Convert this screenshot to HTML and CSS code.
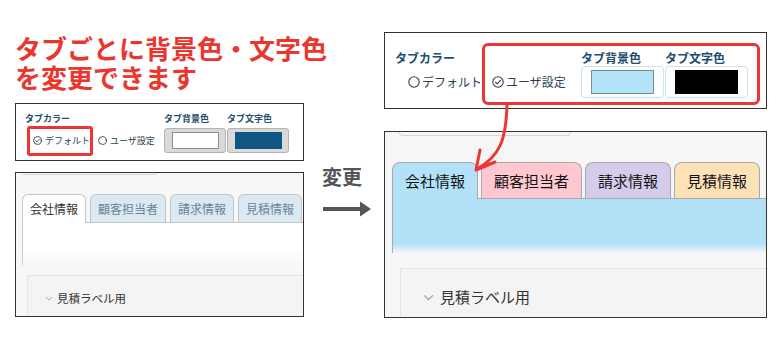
FILE: index.html
```html
<!DOCTYPE html>
<html lang="ja">
<head>
  <meta charset="UTF-8"/>
  <meta name="viewport" content="width=device-width, initial-scale=1.0"/>
  <title>タブカラー設定</title>
  <link rel="stylesheet" href="styles.css">
</head>
<body>
  <div class="page">
    <!-- before -->
    <section class="col-before">
      <h1 class="headline">
        <span class="headline-line">タブごとに背景色・文字色</span>
        <span class="headline-line">を変更できます</span>
      </h1>
      <div class="shot setting setting--sm">
        <div class="setting-grid">
          <span class="setting-label">タブカラー</span>
          <span class="setting-label">タブ背景色</span>
          <span class="setting-label">タブ文字色</span>
          <div class="radios">
            <span class="radio is-marked">
              <svg class="radio-icon" viewBox="0 0 12 12"><circle cx="6" cy="6" r="5.2"/><path d="M3.5 6.1l1.7 1.8 3.3-3.6"/></svg>デフォルト
            </span>
            <span class="radio">
              <svg class="radio-icon" viewBox="0 0 12 12"><circle cx="6" cy="6" r="5.2"/></svg>ユーザ設定
            </span>
          </div>
          <div class="swatch"><span class="swatch-fill fill-white"></span></div>
          <div class="swatch"><span class="swatch-fill fill-navy"></span></div>
        </div>
      </div>
      <div class="shot tabs-shot tabs-shot--sm">
        <div class="top-edge"></div>
        <div class="tab-row">
          <span class="tab is-active">会社情報</span>
          <span class="tab">顧客担当者</span>
          <span class="tab">請求情報</span>
          <span class="tab">見積情報</span>
        </div>
        <div class="tab-body"></div>
        <div class="fold">
          <svg class="chevron" viewBox="0 0 10 6"><polyline points="1,1 5,5 9,1"/></svg>見積ラベル用
        </div>
      </div>
    </section>

    <!-- arrow between -->
    <div class="col-middle">
      <div class="change-label">変更</div>
      <svg class="change-arrow" viewBox="0 0 48 16"><rect x="0" y="6" width="38" height="4"/><polygon points="37,0.5 48,8 37,15.5"/></svg>
    </div>

    <!-- after -->
    <section class="col-after">
      <div class="shot setting setting--lg">
        <div class="setting-grid">
          <span class="setting-label">タブカラー</span>
          <span class="setting-label">タブ背景色</span>
          <span class="setting-label">タブ文字色</span>
          <div class="radios">
            <span class="radio">
              <svg class="radio-icon" viewBox="0 0 12 12"><circle cx="6" cy="6" r="5.2"/></svg>デフォルト
            </span>
            <span class="radio">
              <svg class="radio-icon" viewBox="0 0 12 12"><circle cx="6" cy="6" r="5.2"/><path d="M3.5 6.1l1.7 1.8 3.3-3.6"/></svg>ユーザ設定
            </span>
          </div>
          <div class="swatch"><span class="swatch-fill fill-sky"></span></div>
          <div class="swatch"><span class="swatch-fill fill-black"></span></div>
        </div>
        <div class="mark-box"></div>
      </div>
      <div class="shot tabs-shot tabs-shot--lg">
        <div class="top-edge"></div>
        <div class="tab-row">
          <span class="tab tab-sky is-active">会社情報</span>
          <span class="tab tab-pink">顧客担当者</span>
          <span class="tab tab-lilac">請求情報</span>
          <span class="tab tab-peach">見積情報</span>
        </div>
        <div class="tab-body"></div>
        <div class="fold">
          <svg class="chevron" viewBox="0 0 10 6"><polyline points="1,1 5,5 9,1"/></svg>見積ラベル用
        </div>
      </div>
      <svg class="pointer" viewBox="0 0 383 350">
        <path d="M123 105 C122 140 116 156 93 169"/>
        <path d="M96 150 L92 170 L111 162"/>
      </svg>
    </section>
  </div>
</body>
</html>
```

FILE: styles.css
```css
:root {
  --red: #ec3636;
  --headline: #e9372f;
  --label: #1f4d6d;
  --sky: #b3e2f8;
  --panel-bg: #f7f7f7;
  --font-stack: "Noto Sans CJK JP", "Noto Sans", sans-serif;
}
*, *::before, *::after { box-sizing: border-box; }
body {
  margin: 0;
  background: #fff;
  color: #333;
  font-family: var(--font-stack);
}
.page {
  display: flex;
  height: 350px;
  padding-left: 15px;
  overflow: hidden;
}

/* columns */
.col-before { width: 289px; padding-top: 36px; }
.col-middle { width: 80px; padding: 165px 0 0 18px; }
.col-after { width: 383px; padding-top: 32px; position: relative; }

.headline {
  display: flex; flex-direction: column; gap: 6px;
  margin: 0 0 15px;
  font-size: 26px; line-height: 23px; font-weight: 700;
  color: var(--headline);
  white-space: nowrap;
}
.headline-line { display: block; height: 23px; }
.change-label { font-size: 20px; line-height: 24px; font-weight: 700; color: #555; }
.change-arrow { display: block; width: 48px; height: 16px; margin: 12px 0 0 1px; fill: #555; }

.shot {
  position: relative;
  border: 1px solid #333;
  background: #fff;
  overflow: hidden;
}

/* tab colour setting */
.setting-grid { display: grid; align-items: center; }
.setting-label { font-weight: 700; color: var(--label); white-space: nowrap; }
.radios { display: flex; align-items: center; }
.radio {
  position: relative;
  display: inline-flex; align-items: center;
  color: #2b3f52; white-space: nowrap;
}
.radio-icon { fill: none; stroke: currentColor; stroke-linecap: round; stroke-linejoin: round; }
.swatch { display: flex; align-items: center; justify-content: center; }
.swatch-fill { display: block; }
.fill-white { background: #fff; border: 1px solid #8c8c8c; }
.fill-navy { background: #0f5782; }
.fill-sky { background: #b3e3f8; border: 1px solid #7d8b94; }
.fill-black { background: #000; }

.setting--sm { height: 58px; padding: 9px 0 0 9px; }
.setting--sm .setting-grid { grid-template-columns: 139px 63px 63px; grid-template-rows: 12px 25px; row-gap: 3px; }
.setting--sm .setting-label { font-size: 9px; line-height: 12px; }
.setting--sm .radios { padding-left: 8px; gap: 8px; }
.setting--sm .radio { font-size: 9px; line-height: 12px; gap: 3px; }
.setting--sm .radio-icon { width: 9px; height: 9px; stroke-width: 1.2; }
.setting--sm .radio.is-marked::after {
  content: "";
  position: absolute; top: -9px; bottom: -9px; left: -6px; right: -3px;
  border: 3px solid var(--red); border-radius: 3px;
}
.setting--sm .swatch { width: 62px; height: 25px; background: #d9d9d9; border: 1px solid #b3b3b3; border-radius: 3px; }
.setting--sm .swatch-fill { width: 47px; height: 17px; }

.setting--lg { height: 77px; padding: 19px 0 0 10px; }
.setting--lg .setting-grid { grid-template-columns: 186px 84px 83px; grid-template-rows: 12px 32px; row-gap: 2px; }
.setting--lg .setting-label { font-size: 12px; line-height: 12px; }
.setting--lg .radios { padding-left: 13px; gap: 10px; }
.setting--lg .radio { font-size: 12px; line-height: 14px; gap: 2px; }
.setting--lg .radio-icon { width: 12px; height: 12px; stroke-width: 1.1; }
.setting--lg .swatch { width: 83px; height: 32px; border: 1px solid #cfe2ec; border-radius: 4px; }
.setting--lg .swatch-fill { width: 63px; height: 24px; }
.mark-box {
  position: absolute; left: 97px; top: 10px; width: 278px; height: 62px;
  border: 3px solid var(--red); border-radius: 6px;
}

/* tabs */
.tabs-shot { background: var(--panel-bg); }
.top-edge { border: 1px solid #d6d6d6; border-top: 0; border-radius: 0 0 6px 6px; }
.tab-row { display: flex; align-items: flex-end; border-bottom: 1px solid #c6c6c6; }
.tab { border: 1px solid #c6c6c6; border-bottom: 0; white-space: nowrap; }
.tab.is-active { margin-bottom: -1px; }
.tab-body { border-left: 1px solid #ccc; }
.fold {
  display: flex; align-items: flex-start;
  border-top: 1px solid #e4e4e4; border-left: 1px solid #e4e4e4;
  background: #f4f4f4; color: #333;
}
.chevron { fill: none; stroke: #9a9a9a; stroke-width: 1; flex: none; }

.tabs-shot--sm { height: 145px; margin-top: 11px; }
.tabs-shot--sm .top-edge { margin: 0 0 19px 7px; width: 134px; height: 2px; }
.tabs-shot--sm .tab-row { margin-left: 6px; gap: 4px; }
.tabs-shot--sm .tab {
  height: 28px; padding: 0 7px;
  font-size: 12px; line-height: 27px;
  border-radius: 6px 6px 0 0;
  background: #dae9f2; color: #6a8395;
}
.tabs-shot--sm .tab.is-active { height: 29px; background: #fff; color: #333; }
.tabs-shot--sm .tab-body { margin-left: 6px; height: 42px; background: linear-gradient(#fff 60%, var(--panel-bg)); }
.tabs-shot--sm .fold { margin: 10px 0 0 11px; padding: 14px 0 0 17px; height: 60px; font-size: 11.5px; line-height: 16px; gap: 4px; }
.tabs-shot--sm .chevron { width: 8px; height: 5px; margin-top: 6px; }

.tabs-shot--lg { height: 187px; margin-top: 22px; background: #f6f6f6; }
.tabs-shot--lg .top-edge { margin: 0 0 26px 14px; width: 172px; height: 4px; }
.tabs-shot--lg .tab-row { margin-left: 7px; gap: 3px; border-bottom-color: #a9a9a9; }
.tabs-shot--lg .tab {
  height: 36px; padding: 0 12px;
  font-size: 15px; line-height: 35px;
  border-color: #a9a9a9; border-radius: 8px 8px 0 0;
  color: #111;
}
.tabs-shot--lg .tab.is-active { height: 37px; }
.tab-sky { background: var(--sky); }
.tab-pink { background: #ffc8d1; }
.tab-lilac { background: #d5cbea; }
.tab-peach { background: #fee2b7; }
.tabs-shot--lg .tab-body {
  margin-left: 7px; height: 54px;
  border-left-color: #aaa;
  background: linear-gradient(var(--sky) 0 45px, #f6f6f6 54px);
}
.tabs-shot--lg .fold { margin: 15px 0 0 15px; padding: 18px 0 0 22px; height: 60px; font-size: 15px; line-height: 20px; gap: 6px; }
.tabs-shot--lg .chevron { width: 11px; height: 7px; margin-top: 7px; }

.pointer {
  position: absolute; left: 0; top: 0;
  width: 383px; height: 350px;
  fill: none; stroke: var(--red); stroke-width: 3;
  stroke-linecap: round; stroke-linejoin: round;
  pointer-events: none;
}
```
